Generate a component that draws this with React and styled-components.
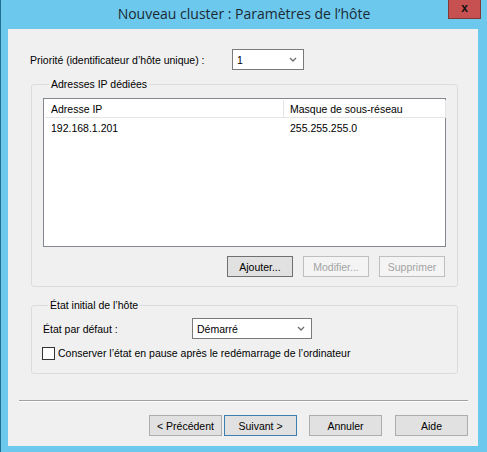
import React from 'react';
import styled, { createGlobalStyle } from 'styled-components';

const GlobalStyle = createGlobalStyle`
  html, body {
    margin: 0;
    padding: 0;
    background: #6cc8ec;
  }
  * {
    box-sizing: border-box;
  }
`;

// Window chrome
const Window = styled.div`
  width: 487px;
  height: 452px;
  background: #6cc8ec;
  border-left: 1px solid #1f6f93;
  display: flex;
  flex-direction: column;
  position: relative;
  font-family: "Liberation Sans", Arial, sans-serif;
  font-size: 10.5px;
  color: #000;
`;

const TitleBar = styled.div`
  height: 29px;
  display: flex;
  align-items: center;
  justify-content: center;
  padding-bottom: 3px;
`;

const Title = styled.h1`
  margin: 0;
  font-family: "Open Sans", "Noto Sans", sans-serif;
  font-weight: 400;
  font-size: 14px;
  color: #1b2b35;
`;

const CloseButton = styled.div`
  position: absolute;
  top: 0;
  right: 6px;
  width: 33px;
  height: 19px;
  background: #c75050;
  border: 1px solid #7d3a36;
  border-top: none;
  display: flex;
  align-items: center;
  justify-content: center;
  font-family: "Liberation Sans", Arial, sans-serif;
  font-weight: 700;
  font-size: 12px;
  color: #111;
  padding-bottom: 2px;
`;

const Client = styled.div`
  margin: 0 9px 0 7px;
  height: 417px;
  background: #f0f0f0;
  display: flex;
  flex-direction: column;
  padding-top: 20px;
`;

const Row = styled.div`
  display: flex;
  align-items: center;
  padding-left: ${(p) => p.$indent || 0}px;
  margin-top: ${(p) => p.$top || 0}px;
  height: ${(p) => (p.$height ? `${p.$height}px` : 'auto')};
`;

const Label = styled.span`
  width: ${(p) => p.$width}px;
  flex: none;
`;

// Drop-down combo box
const Combo = styled.div`
  width: ${(p) => p.$width}px;
  height: 21px;
  background: #fff;
  border: 1px solid #7a7a7a;
  display: flex;
  align-items: center;
  justify-content: space-between;
  padding: 0 6px 0 4px;
`;

const Chevron = () => (
  <svg width="8" height="5" viewBox="0 0 8 5">
    <polyline points="1,1 4,4 7,1" fill="none" stroke="#707070" strokeWidth="1.4" />
  </svg>
);

const Group = styled.fieldset`
  margin: ${(p) => p.$top}px 0 0 23px;
  width: 427px;
  border: 1px solid #dcdcdc;
  border-radius: 3px;
  padding: ${(p) => p.$pad};
  min-width: 0;
`;

const Legend = styled.legend`
  padding: 0 2px;
  margin-left: 6px;
  line-height: 14px;
`;

// List view
const ListView = styled.div`
  height: 149px;
  background: #fff;
  border: 1px solid #828790;
  padding: 1px;
`;

const ListHeader = styled.div`
  display: grid;
  grid-template-columns: 239px 161px;
  height: 18px;
  width: 401px;
  border-bottom: 1px solid #e5e5e5;
  border-right: 1px solid #e5e5e5;
`;

const HeaderCell = styled.div`
  padding-left: 6px;
  display: flex;
  align-items: center;
  border-right: ${(p) => (p.$divider ? '1px solid #e5e5e5' : 'none')};
`;

const ListRow = styled.div`
  display: grid;
  grid-template-columns: 239px 161px;
  height: 17px;
  margin-top: 1px;
`;

const Cell = styled.div`
  padding-left: 6px;
  display: flex;
  align-items: center;
`;

const ButtonRow = styled.div`
  display: flex;
  justify-content: flex-end;
  gap: ${(p) => p.$gap || 10}px;
  margin-top: ${(p) => p.$top || 0}px;
  padding-right: ${(p) => p.$right || 0}px;
`;

const Button = styled.button`
  width: ${(p) => p.$width || 66}px;
  height: 21px;
  margin: 0;
  margin-left: ${(p) => p.$extra || 0}px;
  padding: 0;
  font-family: "Liberation Sans", Arial, sans-serif;
  font-size: 10.5px;
  background: ${(p) => (p.disabled ? '#f4f4f4' : '#e1e1e1')};
  color: ${(p) => (p.disabled ? '#a3a3a3' : '#000')};
  border: 1px solid
    ${(p) => (p.disabled ? '#bfbfbf' : p.$focus ? '#3c7fb1' : p.$hot ? '#707070' : '#adadad')};
`;

const CheckBox = styled.span`
  width: 13px;
  height: 13px;
  background: #fff;
  border: 1px solid #333;
  margin-right: 3px;
  flex: none;
`;

const Separator = styled.hr`
  margin: 26px 10px 0 11px;
  border: none;
  border-top: 1px solid #a0a0a0;
  border-bottom: 1px solid #fff;
  height: 0;
`;

const App = () => (
  <>
    <GlobalStyle />
    <Window>
      <TitleBar>
        <Title>Nouveau cluster : Paramètres de l’hôte</Title>
      </TitleBar>
      <CloseButton>x</CloseButton>

      <Client>
        <Row $indent={22}>
          <Label $width={202}>Priorité (identificateur d’hôte unique) :</Label>
          <Combo $width={72}>
            <span>1</span>
            <Chevron />
          </Combo>
        </Row>

        <Group $top={7} $pad="7px 11px 9px">
          <Legend>Adresses IP dédiées</Legend>
          <ListView>
            <ListHeader>
              <HeaderCell $divider>Adresse IP</HeaderCell>
              <HeaderCell>Masque de sous-réseau</HeaderCell>
            </ListHeader>
            <ListRow>
              <Cell>192.168.1.201</Cell>
              <Cell>255.255.255.0</Cell>
            </ListRow>
          </ListView>
          <ButtonRow $top={9} $right={1} $gap={10}>
            <Button $hot>Ajouter...</Button>
            <Button disabled>Modifier...</Button>
            <Button disabled>Supprimer</Button>
          </ButtonRow>
        </Group>

        <Group $top={11} $pad="6px 11px 12px 10px">
          <Legend>État initial de l’hôte</Legend>
          <Row $indent={1}>
            <Label $width={149}>État par défaut :</Label>
            <Combo $width={120}>
              <span>Démarré</span>
              <Chevron />
            </Combo>
          </Row>
          <Row $top={6} $height={16}>
            <CheckBox />
            <span>Conserver l’état en pause après le redémarrage de l’ordinateur</span>
          </Row>
        </Group>

        <Separator />

        <ButtonRow $top={13} $right={10} $gap={2}>
          <Button $width={73}>&lt; Précédent</Button>
          <Button $width={73} $focus>Suivant &gt;</Button>
          <Button $width={73} $extra={10}>Annuler</Button>
          <Button $width={73} $extra={11}>Aide</Button>
        </ButtonRow>
      </Client>
    </Window>
  </>
);

export default App;
